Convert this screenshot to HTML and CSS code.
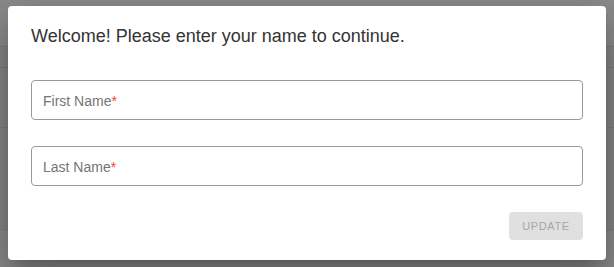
FILE: index.html
```html
<!DOCTYPE html>
<html lang="en">
<head>
<meta charset="utf-8">
<title>Welcome</title>
<link rel="stylesheet" href="styles.css">
</head>
<body>
<div class="page">
  <div class="under">
    <div class="row r1"></div>
    <div class="row r2"></div>
    <div class="row r3"></div>
    <div class="row r4"></div>
  </div>
  <div class="dialog" role="dialog">
    <h2 class="title">Welcome! Please enter your name to continue.</h2>
    <div class="field"><span class="label">First Name<span class="req">*</span></span></div>
    <div class="field"><span class="label">Last Name<span class="req">*</span></span></div>
    <div class="actions"><button class="btn" disabled>UPDATE</button></div>
  </div>
</div>
</body>
</html>
```

FILE: styles.css
```css
html, body {
  margin: 0;
  padding: 0;
}
body {
  font-family: "Liberation Sans", Arial, sans-serif;
  background: #8a8a8a;
}
.page {
  position: relative;
  width: 614px;
  height: 267px;
  overflow: hidden;
  background: #8a8a8a;
}
.under {
  display: flex;
  flex-direction: column;
}
.row {
  border-bottom: 1px solid #7c7c7c;
}
.r1 { height: 46px; background: #8b8b8b; }
.r2 { height: 20px; background: #858585; }
.r3 { height: 59px; background: #858585; }
.r4 { height: 101px; background: #858585; }
.dialog {
  position: absolute;
  left: 8px;
  top: 6px;
  width: 598px;
  height: 254px;
  box-sizing: border-box;
  background: #fff;
  border-radius: 4px;
  padding: 19px 23px 20px;
  display: flex;
  flex-direction: column;
  box-shadow: 0 11px 15px -7px rgba(0,0,0,0.2), 0 24px 38px 3px rgba(0,0,0,0.14), 0 9px 46px 8px rgba(0,0,0,0.12);
}
.title {
  margin: 0 0 33px;
  font-size: 18px;
  font-weight: normal;
  line-height: 22px;
  color: #333;
}
.field {
  height: 40px;
  box-sizing: border-box;
  border: 1px solid #9a9a9a;
  border-radius: 4px;
  display: flex;
  align-items: center;
  padding: 0 11px;
  margin-bottom: 26px;
}
.label {
  font-size: 14px;
  color: #757575;
  position: relative;
  top: 1px;
}
.req {
  color: #f44336;
}
.actions {
  display: flex;
  justify-content: flex-end;
}
.btn {
  width: 74px;
  height: 28px;
  border: 0;
  border-radius: 4px;
  background: #e0e0e0;
  color: #a6a6a6;
  font-family: "Liberation Sans", Arial, sans-serif;
  font-size: 11px;
  letter-spacing: 0.6px;
  padding: 0;
}
```
